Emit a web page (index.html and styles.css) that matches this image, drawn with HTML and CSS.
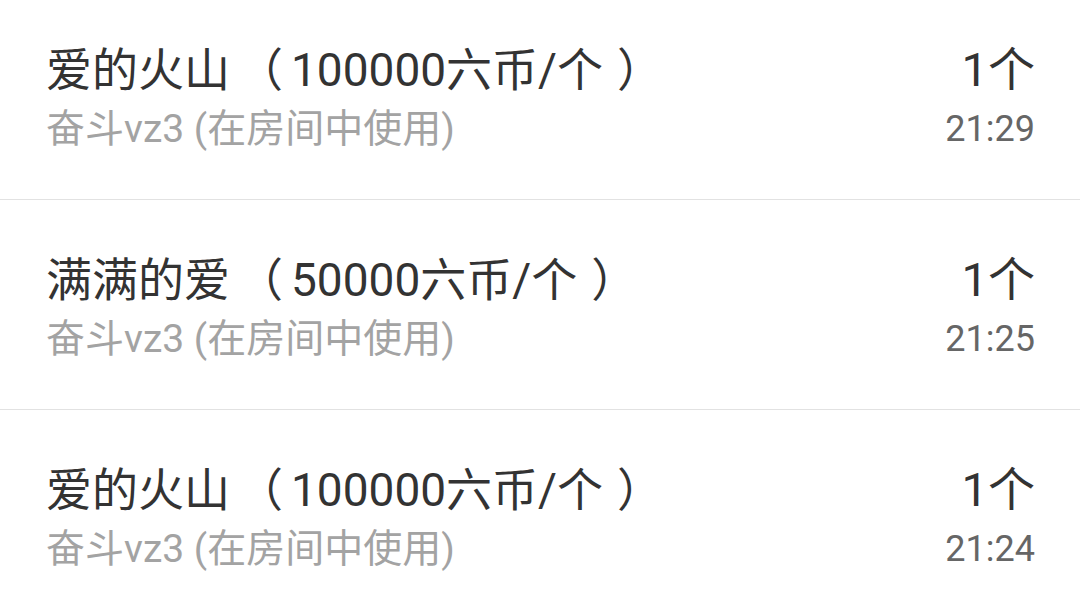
FILE: index.html
```html
<!DOCTYPE html>
<html lang="zh-CN">
<head>
<meta charset="utf-8">
<title>礼物记录</title>
<link rel="stylesheet" href="styles.css">
</head>
<body>
<div class="list">
  <div class="row">
    <div class="left">
      <div class="title">爱的火山<span class="lp">（</span>100000六币/个<span class="rp">）</span></div>
      <div class="sub">奋斗vz3 (在房间中使用)</div>
    </div>
    <div class="right">
      <div class="count">1个</div>
      <div class="time">21:29</div>
    </div>
  </div>
  <div class="row">
    <div class="left">
      <div class="title">满满的爱<span class="lp">（</span>50000六币/个<span class="rp">）</span></div>
      <div class="sub">奋斗vz3 (在房间中使用)</div>
    </div>
    <div class="right">
      <div class="count">1个</div>
      <div class="time">21:25</div>
    </div>
  </div>
  <div class="row">
    <div class="left">
      <div class="title">爱的火山<span class="lp">（</span>100000六币/个<span class="rp">）</span></div>
      <div class="sub">奋斗vz3 (在房间中使用)</div>
    </div>
    <div class="right">
      <div class="count">1个</div>
      <div class="time">21:24</div>
    </div>
  </div>
</div>
</body>
</html>
```
FILE: styles.css
```css
html, body {
  margin: 0;
  padding: 0;
  background: #ffffff;
}
body {
  width: 1080px;
  height: 616px;
  overflow: hidden;
  font-family: Roboto, "Noto Sans CJK SC", sans-serif;
}
.list {
  margin-top: -10px;
}
.row {
  display: flex;
  justify-content: space-between;
  padding: 51px 45px 45px 46px;
  border-bottom: 1px solid #e2e2e2;
}
.left, .right {
  display: flex;
  flex-direction: column;
}
.right {
  align-items: flex-end;
}
.title, .count {
  font-size: 46px;
  line-height: 58px;
  color: #333333;
  white-space: nowrap;
}
.lp {
  margin: 0 8px 0 7px;
}
.rp {
  margin-left: 14px;
}
.count {
  font-size: 47px;
}
.sub, .time {
  font-size: 36px;
  line-height: 50px;
  margin-top: 5px;
}
.sub {
  font-size: 39px;
  color: #a3a3a3;
}
.time {
  color: #666666;
}
```
